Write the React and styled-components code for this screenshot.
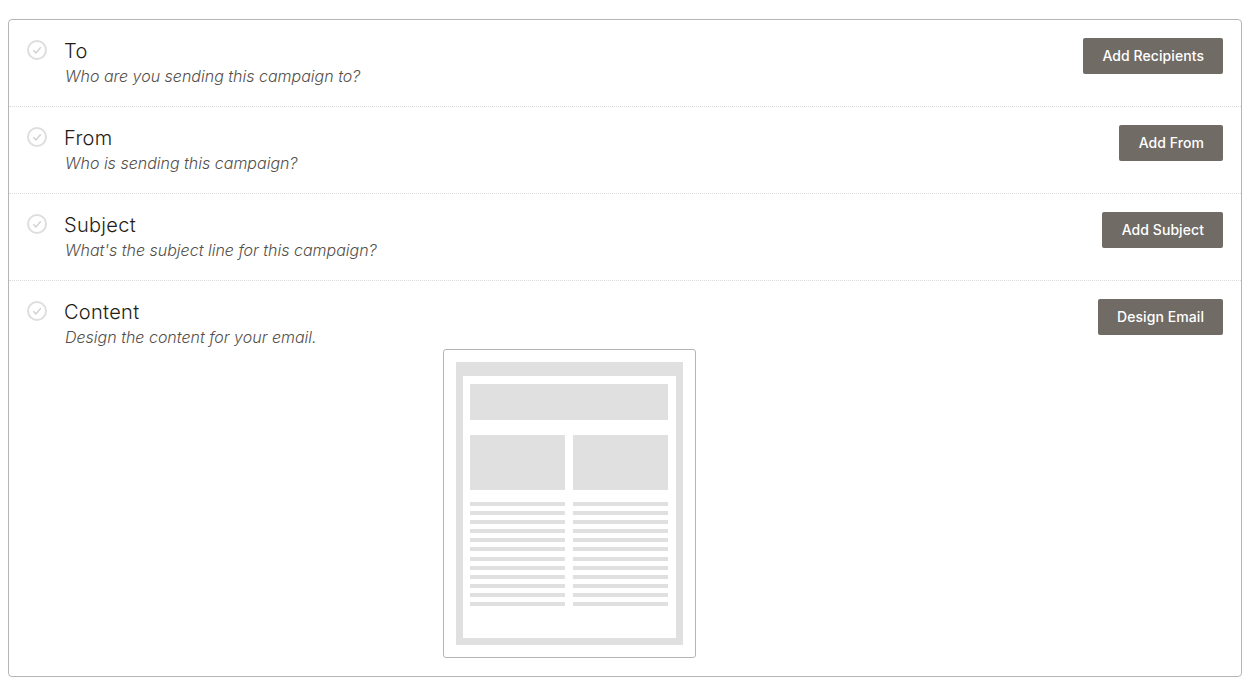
import React from "react";
import styled, { createGlobalStyle } from "styled-components";

const Global = createGlobalStyle`
  html, body { margin: 0; padding: 0; background: #fff; }
  body { font-family: Inter, "Liberation Sans", sans-serif; }
`;

const Page = styled.div`
  padding: 19px 7px 6px 8px;
`;

const Panel = styled.section`
  box-sizing: border-box;
  height: 658px;
  border: 1px solid #b5b5b5;
  border-radius: 4px;
  display: flex;
  flex-direction: column;
`;

const Row = styled.div`
  box-sizing: border-box;
  height: ${(p) => (p.$last ? "auto" : "87px")};
  flex: ${(p) => (p.$last ? 1 : "none")};
  padding: 18px 18px 0 18px;
  display: flex;
  align-items: flex-start;
  border-bottom: ${(p) => (p.$last ? "none" : "1px dotted #dadada")};
`;

const CheckWrap = styled.div`
  flex: none;
  width: 20px;
  height: 20px;
  margin-top: 2px;
  margin-right: 18px;
`;

const Body = styled.div`
  flex: 1;
  min-width: 0;
`;

const Title = styled.h3`
  margin: 0 0 0 -1px;
  font-size: 20px;
  line-height: 26px;
  font-weight: 300;
  letter-spacing: 0.3px;
  color: #241c15;
`;

const Sub = styled.p`
  margin: 0;
  font-size: 16px;
  line-height: 24px;
  font-style: italic;
  font-weight: 300;
  color: #544f4a;
`;

const Action = styled.button`
  flex: none;
  height: 36px;
  padding: 0 19px 2px 19.4px;
  border: 0;
  border-radius: 2px;
  background: #716b66;
  color: #fff;
  font-family: inherit;
  font-size: 14px;
  font-weight: 500;
  letter-spacing: 0.07px;
`;

const Preview = styled.div`
  box-sizing: border-box;
  width: 253px;
  height: 309px;
  margin-left: 378px;
  padding: 12px;
  border: 1px solid #b5b5b5;
  border-radius: 3px;
`;

const Sheet = styled.div`
  box-sizing: border-box;
  height: 283px;
  width: 227px;
  border: solid #e0e0e0;
  border-width: 14px 7px 7px 7px;
  padding: 8px 8px 0 7px;
`;

const Banner = styled.div`
  height: 36px;
  background: #e0e0e0;
`;

const Columns = styled.div`
  margin-top: ${(p) => p.$top}px;
  display: grid;
  grid-template-columns: 95px 95px;
  column-gap: 8px;
`;

const Block = styled.div`
  height: 55px;
  background: #e0e0e0;
`;

const Lines = styled.div`
  display: flex;
  flex-direction: column;
  gap: 5.1px;
`;

const Line = styled.div`
  height: 4px;
  background: #e0e0e0;
`;

const Check = () => (
  <svg width="20" height="20" viewBox="0 0 20 20" fill="none">
    <circle cx="10" cy="10" r="9" stroke="#dedede" strokeWidth="2" />
    <path d="M6.3 10.3l2.6 2.6 4.9-5.6" stroke="#d2d2d2" strokeWidth="1.5" />
  </svg>
);

const rows = [
  ["To", "Who are you sending this campaign to?", "Add Recipients"],
  ["From", "Who is sending this campaign?", "Add From"],
  ["Subject", "What's the subject line for this campaign?", "Add Subject"],
];

const lineKeys = Array.from({ length: 12 }, (_, i) => i);

const TextLines = () => (
  <Lines>
    {lineKeys.map((k) => (
      <Line key={k} />
    ))}
  </Lines>
);

export default function App() {
  return (
    <Page>
      <Global />
      <Panel>
        {rows.map(([t, s, a]) => (
          <Row key={t}>
            <CheckWrap>
              <Check />
            </CheckWrap>
            <Body>
              <Title>{t}</Title>
              <Sub>{s}</Sub>
            </Body>
            <Action>{a}</Action>
          </Row>
        ))}
        <Row $last>
          <CheckWrap>
            <Check />
          </CheckWrap>
          <Body>
            <Title>Content</Title>
            <Sub>Design the content for your email.</Sub>
            <Preview>
              <Sheet>
                <Banner />
                <Columns $top={15}>
                  <Block />
                  <Block />
                </Columns>
                <Columns $top={12}>
                  <TextLines />
                  <TextLines />
                </Columns>
              </Sheet>
            </Preview>
          </Body>
          <Action>Design Email</Action>
        </Row>
      </Panel>
    </Page>
  );
}
